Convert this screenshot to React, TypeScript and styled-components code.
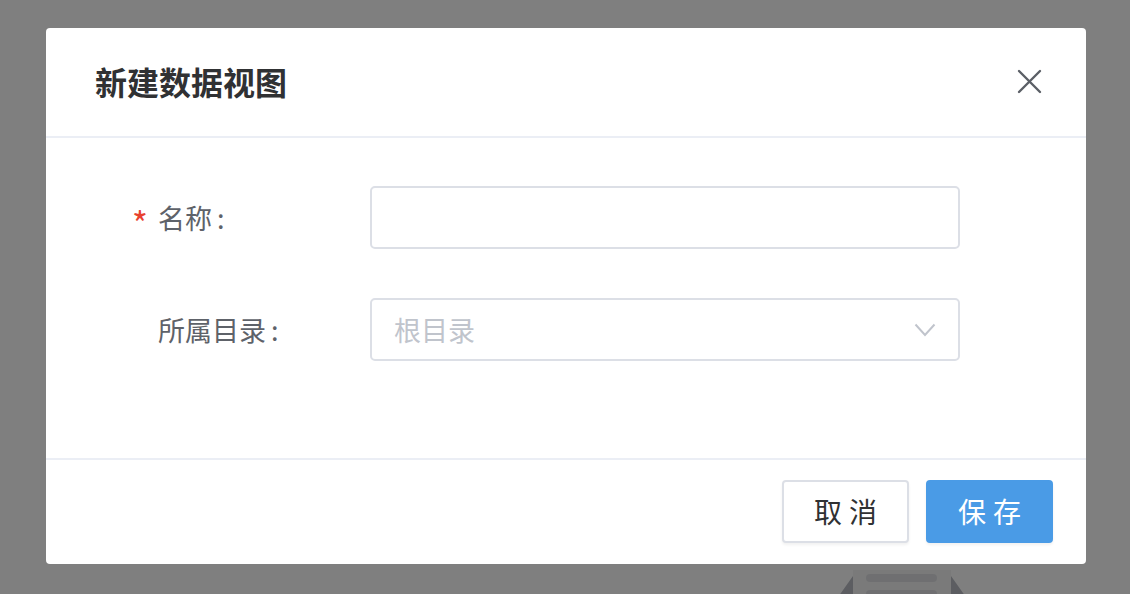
import React from 'react'
import styled, { createGlobalStyle } from 'styled-components'

const GlobalStyle = createGlobalStyle`
  html, body {
    margin: 0;
    padding: 0;
    background: #ffffff;
    font-family: "Noto Sans CJK SC", "Noto Sans", "Liberation Sans", sans-serif;
  }
  * {
    box-sizing: border-box;
  }
`

const Page = styled.div`
  position: relative;
  width: 1130px;
  height: 594px;
  overflow: hidden;
  background: #ffffff;
`

const BackdropArt = styled.svg`
  position: absolute;
  left: 820px;
  top: 560px;
`

const Overlay = styled.div`
  position: absolute;
  inset: 0;
  background: rgba(0, 0, 0, 0.5);
  display: flex;
  justify-content: center;
  padding: 28px 0 0 2px;
`

const Dialog = styled.div`
  width: 1040px;
  height: 536px;
  background: #ffffff;
  border-radius: 4px;
  display: flex;
  flex-direction: column;
`

const Header = styled.div`
  height: 110px;
  display: flex;
  align-items: center;
  justify-content: space-between;
  padding: 0 44px 2px 49px;
  border-bottom: 2px solid #ebeef5;
`

const Title = styled.h2`
  margin: 0;
  font-size: 32px;
  font-weight: 700;
  color: #303133;
`

const CloseButton = styled.button`
  border: none;
  background: transparent;
  padding: 0;
  width: 26px;
  height: 26px;
  display: flex;
  align-items: center;
  justify-content: center;
  cursor: pointer;
`

const Body = styled.div`
  flex: 1;
  padding: 48px 0 0 88px;
  display: flex;
  flex-direction: column;
  gap: 49px;
`

const Row = styled.div`
  display: flex;
  align-items: center;
  height: 63px;
`

const Label = styled.label`
  width: 236px;
  display: flex;
  align-items: center;
  font-size: 27px;
  color: #5e6269;
`

const Colon = styled.span`
  margin-left: 5px;
`

const Star = styled.span<{ $hidden?: boolean }>`
  width: 24px;
  margin-left: -2px;
  margin-right: 2px;
  color: #e8412f;
  font-size: 34px;
  line-height: 1;
  visibility: ${({ $hidden }) => ($hidden ? 'hidden' : 'visible')};
  position: relative;
  top: 5px;
`

const Field = styled.div`
  width: 590px;
  height: 63px;
  border: 2px solid #dcdfe6;
  border-radius: 5px;
  display: flex;
  align-items: center;
  padding: 0 22px;
`

const Input = styled.input`
  border: none;
  outline: none;
  width: 100%;
  font-family: inherit;
  font-size: 27px;
  color: #606266;
  background: transparent;
`

const Placeholder = styled.span`
  flex: 1;
  font-size: 27px;
  color: #c0c4cc;
`

const Footer = styled.div`
  height: 106px;
  border-top: 2px solid #ebeef5;
  display: flex;
  justify-content: flex-end;
  align-items: center;
  gap: 17px;
  padding: 0 33px 2px 0;
`

const Button = styled.button<{ $primary?: boolean }>`
  width: 127px;
  height: 63px;
  border-radius: 4px;
  font-family: inherit;
  font-size: 28px;
  letter-spacing: 7px;
  text-indent: 7px;
  cursor: pointer;
  border: 2px solid ${({ $primary }) => ($primary ? '#4a9be6' : '#dcdfe6')};
  background: ${({ $primary }) => ($primary ? '#4a9be6' : '#ffffff')};
  color: ${({ $primary }) => ($primary ? '#ffffff' : '#303133')};
  box-shadow: 0 2px 3px rgba(0, 0, 0, 0.06);
`

const App = () => (
  <Page>
    <GlobalStyle />
    <BackdropArt width="180" height="40" viewBox="0 0 180 40">
      <polygon points="16,40 33,16 33,40" fill="#b8bbc3" />
      <polygon points="131,16 148,40 131,40" fill="#b8bbc3" />
      <rect x="33" y="10" width="98" height="30" fill="#f4f4f4" />
      <rect x="46" y="14" width="71" height="8" rx="4" fill="#dedfe3" />
      <rect x="46" y="30" width="71" height="8" rx="4" fill="#dedfe3" />
    </BackdropArt>
    <Overlay>
      <Dialog>
        <Header>
          <Title>新建数据视图</Title>
          <CloseButton aria-label="close">
            <svg width="25" height="25" viewBox="0 0 25 25">
              <path d="M2 2 L23 23 M23 2 L2 23" stroke="#5b5f66" strokeWidth="2.4" strokeLinecap="round" fill="none" />
            </svg>
          </CloseButton>
        </Header>
        <Body>
          <Row>
            <Label>
              <Star>*</Star>
              名称<Colon>:</Colon>
            </Label>
            <Field>
              <Input />
            </Field>
          </Row>
          <Row>
            <Label>
              <Star $hidden>*</Star>
              所属目录<Colon>:</Colon>
            </Label>
            <Field>
              <Placeholder>根目录</Placeholder>
              <svg width="22" height="14" viewBox="0 0 22 14">
                <path d="M1.5 1.5 L11 12 L20.5 1.5" stroke="#c0c4cc" strokeWidth="2" fill="none" />
              </svg>
            </Field>
          </Row>
        </Body>
        <Footer>
          <Button>取消</Button>
          <Button $primary>保存</Button>
        </Footer>
      </Dialog>
    </Overlay>
  </Page>
)

export default App
